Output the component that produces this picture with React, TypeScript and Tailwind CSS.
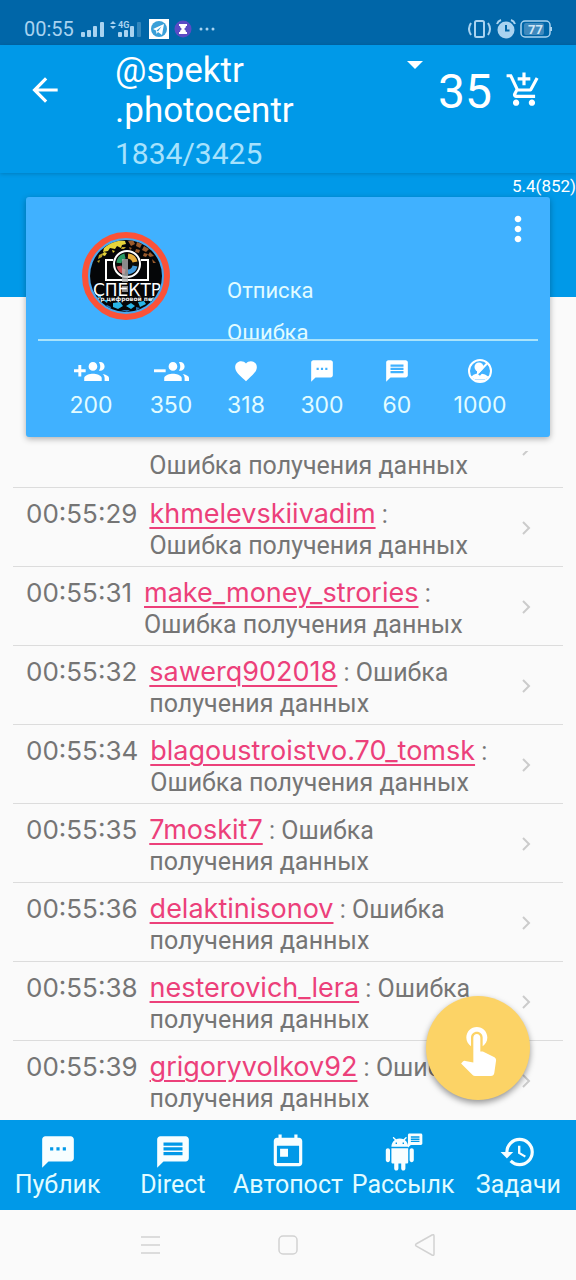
import React from "react";
import {
  MdAddShoppingCart,
  MdArrowBack,
  MdFavorite,
  MdHistory,
  MdMessage,
  MdMoreVert,
  MdTextsms,
  MdToday,
} from "react-icons/md";

const entries = [
  { time: "00:55:28", user: "" },
  { time: "00:55:29", user: "khmelevskiivadim" },
  { time: "00:55:31", user: "make_money_strories" },
  { time: "00:55:32", user: "sawerq902018" },
  { time: "00:55:34", user: "blagoustroistvo.70_tomsk" },
  { time: "00:55:35", user: "7moskit7" },
  { time: "00:55:36", user: "delaktinisonov" },
  { time: "00:55:38", user: "nesterovich_lera" },
  { time: "00:55:39", user: "grigoryvolkov92" },
];

function StatusBar() {
  return (
    <div className="flex h-[45px] shrink-0 items-center justify-between bg-[#0066a8] pt-3 pr-6 pl-6 text-[#a9d3f0]">
      <div className="flex items-center">
        <span className="w-[49px] text-[20px] leading-6">00:55</span>
        <svg className="ml-2 h-5 w-6" viewBox="0 0 24 20" fill="currentColor">
          <rect x="0" y="13" width="4" height="5" rx="1" />
          <rect x="6" y="11" width="4" height="7" rx="1" />
          <rect x="12" y="7" width="4" height="11" rx="1" />
          <rect x="19" y="3" width="4" height="15" rx="1" />
        </svg>
        <svg className="ml-1 h-5 w-8" viewBox="0 0 32 20" fill="currentColor">
          <path d="M1 5l3-3 3 3zM1 7h6l-3 3z" />
          <text x="9" y="9" fontSize="9" fontWeight="700" fontFamily="Roboto, sans-serif">4G</text>
          <rect x="9" y="13" width="4" height="5" rx="1" />
          <rect x="15" y="11" width="4" height="7" rx="1" />
          <rect x="21" y="7" width="4" height="11" rx="1" />
          <rect x="28" y="3" width="4" height="15" rx="1" opacity=".3" />
        </svg>
        <svg className="ml-2 h-5 w-5" viewBox="0 0 20 20">
          <rect width="20" height="20" fill="#fff" />
          <circle cx="10" cy="10" r="8" fill="#3a9fd8" />
          <path d="M4 10l11-5-2 11-4-3-1.500 2-.5-3.500z" fill="#fff" />
          <path d="M7.500 11.500l5-4-3.500 5z" fill="#3a9fd8" />
        </svg>
        <svg className="ml-1 h-5 w-5" viewBox="0 0 20 20">
          <circle cx="10" cy="10" r="8.500" fill="#5b4bc4" />
          <path d="M6 5h8v2h-1q0 2-2 3 2 1 2 3h1v2H6v-2h1q0-2 2-3-2-1-2-3H6z" fill="#fff" />
        </svg>
        <svg className="ml-1 h-5 w-5" viewBox="0 0 20 20" fill="currentColor">
          <circle cx="4" cy="10" r="1.500" />
          <circle cx="10" cy="10" r="1.500" />
          <circle cx="16" cy="10" r="1.500" />
        </svg>
      </div>
      <div className="flex items-center gap-1">
        <svg className="h-5 w-6" viewBox="0 0 24 20" fill="none" stroke="currentColor" strokeWidth="2">
          <rect x="7" y="2" width="9" height="16" rx="1.500" />
          <path d="M3 4q-4 6 0 12M20 4q4 6 0 12" />
        </svg>
        <svg className="h-5 w-5" viewBox="0 0 20 20">
          <circle cx="10" cy="11" r="8.500" fill="currentColor" />
          <path d="M10 6v5.500h3.500" fill="none" stroke="#0066a8" strokeWidth="2" />
          <path d="M1 5q1-3 4-4M19 5q-1-3-4-4" fill="none" stroke="currentColor" strokeWidth="2" />
        </svg>
        <svg className="h-5 w-8" viewBox="0 0 32 20">
          <rect x="4" y="4" width="20" height="12" rx="2" fill="#3f89bd" />
          <rect x="1" y="2" width="29" height="16" rx="4" fill="none" stroke="currentColor" strokeWidth="1.500" />
          <path d="M31 8v4" stroke="currentColor" strokeWidth="2" />
          <text x="8" y="15" fontSize="13" fontWeight="700" fontFamily="Roboto, sans-serif" fill="#cfe6f6">77</text>
        </svg>
      </div>
    </div>
  );
}

function Header() {
  return (
    <header className="relative z-10 flex h-32 shrink-0 items-start bg-[#0099e8] pl-[25px] text-white shadow-[0_1px_4px_rgba(0,0,0,0.18)]">
      <button aria-label="Назад" className="mt-[25px] flex h-10 w-10 items-center justify-center">
        <MdArrowBack size={38} />
      </button>
      <div className="mt-1.5 ml-[50px] w-[292px]">
        <h1 className="text-[35px] leading-10">
          @spektr
          <br />
          .photocentr
        </h1>
        <p className="mt-[7px] text-[30px] leading-8 text-[#a6e2fd]">1834/3425</p>
      </div>
      <button aria-label="Выбрать аккаунт" className="mt-4 flex h-2 w-4 shrink-0">
        <svg className="h-2 w-4" viewBox="0 0 16 8" fill="currentColor">
          <path d="M0 0h16L8 8z" />
        </svg>
      </button>
      <span className="mt-5 ml-[15px] w-[55px] shrink-0 text-[48px] leading-[54px]">35</span>
      <button aria-label="Добавить в корзину" className="mt-[26px] ml-3 shrink-0">
        <MdAddShoppingCart size={38} />
      </button>
    </header>
  );
}

function Avatar() {
  return (
    <svg className="size-[88px]" viewBox="0 0 88 88" role="img" aria-label="Спектр">
      <defs>
        <clipPath id="avatar">
          <circle cx="44" cy="44" r="36" />
        </clipPath>
      </defs>
      <circle cx="44" cy="44" r="41" fill="#4aa7ee" stroke="#fb5238" strokeWidth="6" />
      <g clipPath="url(#avatar)">
        <path fill="#050608" d="M0 0h88v88H0z" />
        <path fill="#e6d43a" d="M27 12l6-4 10 1 1 3-4 1-1 3-4-2-2 3-5-1-2 3-5 1 1-4zM22 20l3 1-2 3-3-1zM30 18l3 1-2 2z" />
        <path fill="#9a5a2c" d="M46 9l5-1 2 4-4 2zM55 10l5 2-2 4-4-2zM62 14l5 3-3 3-4-2zM68 20l4 4-4 1-2-2zM54 17l4 1-1 3-4-1zM62 21l4 1-2 3-3-1zM70 27l4 4-3 0zM47 15l3 1-2 2z" />
        <path fill="#b9a12d" d="M40 15l4 0-2 2-3 0zM17 23l4-2-1 4-4 2zM15 29l3-1-1 3z" />
        <path fill="#28b6e8" d="M31 71l7-1 3 4-5 3-5-2zM44 74l5-3 4 3-4 3zM56 70l6-1 2 3-6 3zM21 68l5 0-1 3zM66 68l6-3-3 5zM15 62l4 1 0 3-3-1z" />
        <path fill="#216fb2" d="M12 66l5 2 4 4-4 0zM25 73l4 2-1 3-5-3zM39 78l9 0-3 2zM54 75l4 1-4 3zM64 74l4-1-3 4z" />
        <path d="M31 28h-7v20h42V28h-7" fill="none" stroke="#fff" strokeWidth="2" />
        <circle cx="45" cy="32" r="13" fill="#0a0a0a" stroke="#fff" strokeWidth="2" />
        <g fill="none" strokeWidth="5">
          <path d="M37 31a8 8 0 0 1 6-7" stroke="#299a64" />
          <path d="M46 24a8 8 0 0 1 7 6" stroke="#e7ad3a" />
          <path d="M53 34a8 8 0 0 1-7 6" stroke="#4198d9" />
          <path d="M43 40a8 8 0 0 1-6-6" stroke="#c94b51" />
        </g>
        <path d="M40 27h6v23h-6zM40 54h6v6h-6z" fill="#b6b6b6" opacity=".75" />
        <text x="45" y="64" textAnchor="middle" fontFamily="DejaVu Sans, sans-serif" fontSize="17" fill="#fff">СПЕКТР</text>
        <text x="44" y="69" textAnchor="middle" fontFamily="DejaVu Sans, sans-serif" fontSize="6" fontWeight="700" fill="#eee">центр цифровой печати</text>
      </g>
    </svg>
  );
}

function Group({ minus = false }: { minus?: boolean }) {
  return (
    <svg className="h-[19px] w-[35px]" viewBox="0 5 24 13" fill="currentColor">
      <path d={minus ? "M0 10h8v2H0z" : "M8 10H5V7H3v3H0v2h3v3h2v-3h3z"} />
      <path d="M18 11c1.660 0 2.990-1.340 2.990-3S19.660 5 18 5c-.32 0-.63.05-.91.14.57.81.9 1.790.9 2.860s-.34 2.040-.9 2.860c.28.09.59.14.91.14zm-5 0c1.660 0 2.990-1.340 2.990-3S14.660 5 13 5c-1.660 0-3 1.340-3 3s1.340 3 3 3zm6.620 2.160c.83.73 1.380 1.660 1.380 2.840v2h3v-2c0-1.540-2.370-2.490-4.380-2.840zM13 13c-2 0-6 1-6 3v2h12v-2c0-2-4-3-6-3z" />
    </svg>
  );
}

function UserOff() {
  return (
    <svg className="size-[26px]" viewBox="0 0 26 26" fill="currentColor">
      <circle cx="12" cy="9" r="4.500" />
      <path d="M4 19q2-3 6-3.500V12h4v3.500l4 1 4 2.500-4 2.500H8z" />
      <path d="M22 6L12 17" stroke="#40b1ff" strokeWidth="2.500" />
      <path d="M20.500 5L11 15" stroke="currentColor" strokeWidth="2" />
      <path d="M9 22.500h8" stroke="currentColor" strokeWidth="1.500" />
      <circle cx="13" cy="13" r="11" fill="none" stroke="currentColor" strokeWidth="2" />
    </svg>
  );
}

function AndroidMessage() {
  return (
    <svg className="h-[38px] w-[41px]" viewBox="0 0 41 38" fill="currentColor">
      <path
        transform="translate(0 4) scale(1.400)"
        d="M6 18c0 .55.45 1 1 1h1v3.500c0 .83.67 1.500 1.500 1.500s1.500-.67 1.500-1.500V19h2v3.500c0 .83.67 1.500 1.500 1.500s1.500-.67 1.500-1.500V19h1c.55 0 1-.45 1-1V8H6v10zM3.500 8C2.670 8 2 8.670 2 9.500v7c0 .83.67 1.500 1.500 1.500S5 17.330 5 16.500v-7C5 8.670 4.330 8 3.500 8zm17 0c-.83 0-1.500.67-1.500 1.500v7c0 .83.67 1.500 1.500 1.500s1.500-.67 1.500-1.500v-7c0-.83-.67-1.500-1.500-1.500zm-4.970-5.840l1.300-1.300c.2-.2.2-.51 0-.71-.2-.2-.51-.2-.71 0l-1.480 1.480C13.850 1.230 12.950 1 12 1c-.96 0-1.860.23-2.660.63L7.850.15c-.2-.2-.51-.2-.71 0-.2.2-.2.51 0 .71l1.310 1.310C6.970 3.260 6 5.010 6 7h12c0-1.990-.97-3.750-2.470-4.840zM10 5H9V4h1v1zm5 0h-1V4h1v1z"
      />
      <path
        transform="translate(23.500 -1) scale(.72)"
        d="M20 2H4c-1.100 0-1.990.9-1.990 2L2 22l4-4h14c1.100 0 2-.9 2-2V4c0-1.100-.9-2-2-2zm-2 12H6v-2h12v2zm0-3H6V9h12v2zm0-3H6V6h12v2z"
      />
    </svg>
  );
}

const stats = [
  { value: "200", icon: <Group />, width: "w-20" },
  { value: "350", icon: <Group minus />, width: "w-20" },
  { value: "318", icon: <MdFavorite size={26} />, width: "w-[70px]" },
  { value: "300", icon: <MdTextsms size={26} />, width: "w-[82px]" },
  { value: "60", icon: <MdMessage size={26} />, width: "w-[68px]" },
  { value: "1000", icon: <UserOff />, width: "w-[98px]" },
];

function AccountCard() {
  return (
    <section className="relative z-10 mx-[26px] -mt-[100px] h-60 shrink-0 rounded-[3px] bg-[#40b1ff] text-[#e2fcff] shadow-[0_2px_6px_rgba(0,0,0,0.3)]">
      <div className="mx-3 flex h-36 justify-between overflow-hidden border-b-2 border-[#a9e3fb]">
        <div className="mt-[35px] ml-11">
          <Avatar />
        </div>
        <div className="mt-[73px] ml-[57px] flex-1 text-[22px] leading-[42px]">
          <p>Отписка</p>
          <p>Ошибка</p>
        </div>
        <button aria-label="Меню" className="mt-3 h-10 w-10 text-white">
          <MdMoreVert size={40} />
        </button>
      </div>
      <div className="mt-4 flex pl-[25px]">
        {stats.map((s) => (
          <div key={s.value} className={`flex shrink-0 flex-col items-center ${s.width}`}>
            <span className="flex h-7 items-center text-white">{s.icon}</span>
            <span className="mt-1.5 font-['Inter',sans-serif] text-[23px] leading-7">{s.value}</span>
          </div>
        ))}
      </div>
    </section>
  );
}

function Log() {
  return (
    <ul className="mt-3.5 min-h-0 flex-1 overflow-hidden px-[13px] text-[#757575]">
      {entries.map((e) => (
        <li
          key={e.time}
          className="flex h-[79px] items-start border-b border-[#dcdcdc] pt-[10px] pl-[13px] text-[25px] leading-[31px] first:-mt-[42px] last:border-b-0"
        >
          <time className="mr-3 shrink-0 font-['Inter',sans-serif] text-[26px]">{e.time}</time>
          <p className="w-[330px] shrink-0">
            <span className="whitespace-nowrap">
              {e.user ? (
                <>
                  <a href={`#${e.user}`} className="font-['Inter',sans-serif] text-[27px] text-[#ec407a] underline decoration-2 underline-offset-4">
                    {e.user}
                  </a>
                  {" :"}
                </>
              ) : (
                <br />
              )}
            </span>{" "}
            Ошибка получения данных
          </p>
          <svg className="mt-[22px] mr-[30px] ml-auto h-4 w-3 shrink-0" viewBox="0 0 12 16" fill="none" stroke="#cbcbcb" strokeWidth="2">
            <path d="M2 2l6 6-6 6" />
          </svg>
        </li>
      ))}
    </ul>
  );
}

const tabs = [
  { label: "Публик", icon: <MdTextsms size={38} /> },
  { label: "Direct", icon: <MdMessage size={38} /> },
  { label: "Автопост", icon: <MdToday size={38} /> },
  { label: "Рассылк", icon: <AndroidMessage /> },
  { label: "Задачи", icon: <MdHistory size={38} /> },
];

export default function App() {
  return (
    <main className="flex h-screen flex-col overflow-hidden bg-[#fafafa] font-['Roboto',sans-serif]">
      <StatusBar />
      <Header />
      <div className="h-[124px] shrink-0 bg-[#0099e8] pt-1 text-right text-[17px] leading-[18px] text-white">5.4(852)</div>
      <AccountCard />
      <Log />
      <div className="relative shrink-0">
        <button
          aria-label="Запустить"
          className="absolute right-[46px] bottom-[110px] z-20 flex size-[104px] items-center justify-center rounded-full bg-[#fcd366] text-white shadow-[0_3px_6px_rgba(0,0,0,0.4)]"
        >
          <svg className="size-14" viewBox="0 0 24 24" fill="currentColor">
            <path d="M9 11.240V7.500C9 6.120 10.120 5 11.500 5S14 6.120 14 7.500v3.740c1.210-.81 2-2.180 2-3.740C16 5.010 13.990 3 11.500 3S7 5.010 7 7.500c0 1.560.79 2.930 2 3.740zm9.840 4.630l-4.540-2.260c-.17-.07-.35-.11-.54-.11H13v-6c0-.83-.67-1.500-1.500-1.500S10 6.670 10 7.500v10.740l-3.430-.72c-.08-.01-.15-.03-.24-.03-.31 0-.59.13-.79.33l-.79.8 4.940 4.940c.27.27.65.44 1.060.44h6.790c.75 0 1.330-.55 1.440-1.280l.75-5.270c.01-.07.02-.14.02-.2 0-.62-.38-1.160-.91-1.380z" />
          </svg>
        </button>
        <nav className="grid h-[90px] grid-cols-5 bg-[#0099e8] text-[#e2fcff]">
          {tabs.map((t) => (
            <a key={t.label} href="#" className="flex flex-col items-center pt-3">
              <span className="flex h-10 items-center text-[#f7feff]">{t.icon}</span>
              <span className="-mt-0.5 text-[25px] leading-[30px] whitespace-nowrap">{t.label}</span>
            </a>
          ))}
        </nav>
      </div>
      <div className="flex h-[70px] shrink-0 items-center justify-center gap-[113px] text-[#d2d2d2]">
        <button aria-label="Недавние">
          <svg className="size-6" viewBox="0 0 24 24" stroke="currentColor" strokeWidth="1.500">
            <path d="M2 4h19M2 12h19M2 20h19" />
          </svg>
        </button>
        <button aria-label="Домой">
          <svg className="size-6" viewBox="0 0 24 24" fill="none" stroke="currentColor" strokeWidth="1.500">
            <rect x="3" y="3" width="18" height="18" rx="4" />
          </svg>
        </button>
        <button aria-label="Назад в системе">
          <svg className="size-6" viewBox="0 0 24 24" fill="none" stroke="currentColor" strokeWidth="1.500">
            <path d="M3 11L19 2q2-1 2 1v18q0 2-2 1L3 13q-1-1 0-2z" />
          </svg>
        </button>
      </div>
    </main>
  );
}
